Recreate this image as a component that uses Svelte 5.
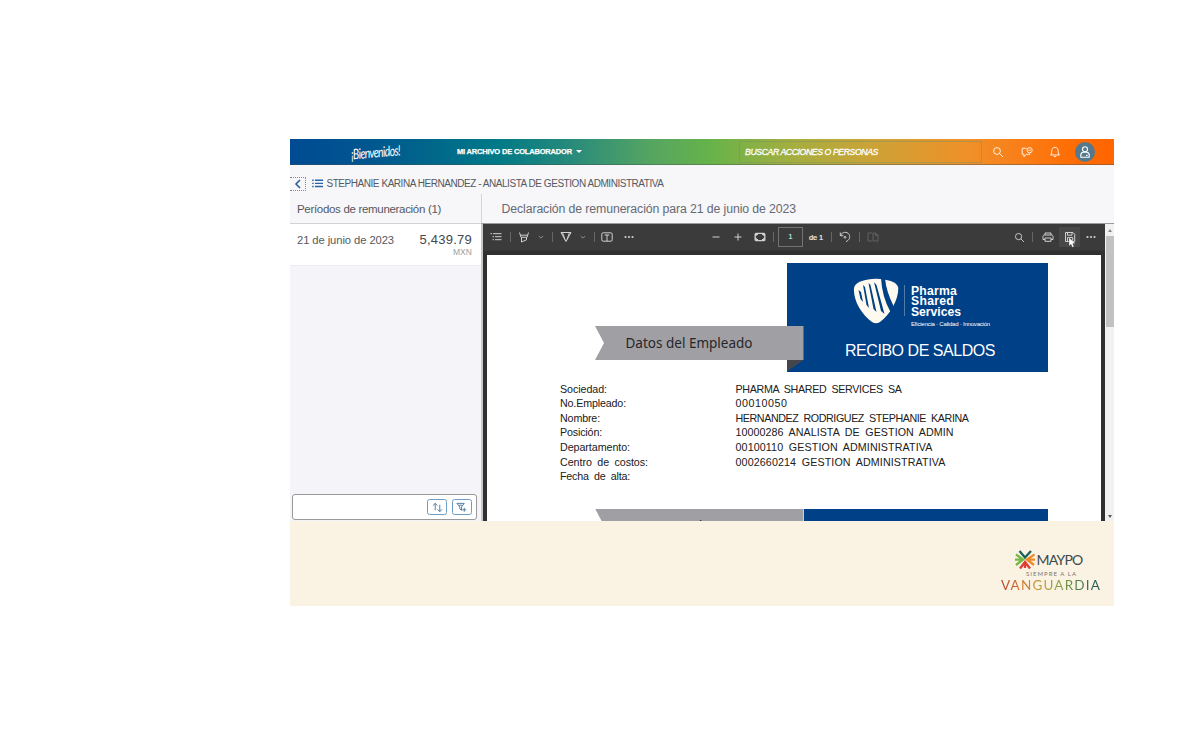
<script>
  const fields = [
    ['Sociedad:', 47, 'PHARMA SHARED SERVICES SA', 166],
    ['No.Empleado:', 66, '00010050', 52],
    ['Nombre:', 40, 'HERNANDEZ RODRIGUEZ STEPHANIE KARINA', 233],
    ['Posición:', 42, '10000286 ANALISTA DE GESTION ADMIN', 218],
    ['Departamento:', 70, '00100110 GESTION ADMINISTRATIVA', 197],
    ['Centro de costos:', 88, '0002660214 GESTION ADMINISTRATIVA', 210],
    ['Fecha de alta:', 70, '', 0]
  ];

  // Spreads the letters of a label so that it takes the given width.
  function track(node, width) {
    const letters = node.textContent.length;
    if (!letters || !width) return;
    const natural = node.getBoundingClientRect().width;
    node.style.letterSpacing = `${(width - natural) / letters}px`;
  }
</script>

{#snippet search()}
  <svg class="ico" viewBox="0 0 12 12"><circle cx="5" cy="5" r="3.4" /><path d="M7.5 7.5L11 11" /></svg>
{/snippet}
{#snippet chevron()}
  <svg class="chev" viewBox="0 0 6 6"><path d="M.8 2L3 4.2L5.2 2" /></svg>
{/snippet}
{#snippet dots()}
  <svg class="ico solid" viewBox="0 0 12 12"><circle cx="2.5" cy="6" r="1.1" /><circle cx="6" cy="6" r="1.1" /><circle cx="9.5" cy="6" r="1.1" /></svg>
{/snippet}

<main class="frame">
  <header class="top">
    <div class="welcome"><span use:track={50}>¡Bienvenidos!</span></div>
    <div class="menu"><span use:track={115}>MI ARCHIVO DE COLABORADOR</span><i class="caret"></i></div>
    <div class="find"><span use:track={133}>BUSCAR ACCIONES O PERSONAS</span></div>
    <nav class="actions">
      {@render search()}
      <svg class="ico" viewBox="0 0 12 12"><path d="M5.500 2.300H1.200V8.300H3V10.800L5.300 8.300H9V7.500" /><circle cx="8.600" cy="4.200" r="2.600" /><path d="M7.400 4.200H9.800" /></svg>
      <svg class="ico" viewBox="0 0 12 12"><path d="M1.500 9C3 7.800 2.700 6 2.800 4.600C3 2.500 4.300 1.300 6 1.300S9 2.500 9.200 4.600C9.300 6 9 7.800 10.500 9ZM4.800 10.600H7.200" /></svg>
      <div class="avatar">
        <svg class="person" viewBox="0 0 12 12"><circle cx="6" cy="3.300" r="2.500" /><path d="M1.800 11.300V9C1.800 7.500 3 6.500 4.300 6.300H7.700C9 6.500 10.200 7.500 10.200 9V11.300ZM7 9.400H8.600" /></svg>
      </div>
    </nav>
  </header>

  <div class="crumb">
    <div class="back"><svg viewBox="0 0 8 10"><path d="M6 1L2 5L6 9" /></svg></div>
    <svg class="list" viewBox="0 0 11 9"><path d="M3 1.300H11M3 4.400H11M3 7.500H11M.2 1.300H1.700M.2 4.400H1.700M.2 7.500H1.700" /></svg>
    <span use:track={337}>STEPHANIE KARINA HERNANDEZ - ANALISTA DE GESTION ADMINISTRATIVA</span>
  </div>

  <section class="body">
    <aside>
      <h2><span use:track={144}>Períodos de remuneración (1)</span></h2>
      <div class="item">
        <span class="date" use:track={97}>21 de junio de 2023</span>
        <div class="amount"><b use:track={52.5}>5,439.79</b><small use:track={19}>MXN</small></div>
      </div>
      <div class="tools">
        <div class="tool"><svg viewBox="0 0 12 12"><path d="M3.500 9V1.500M1 4L3.500 1.500L6 4M8.500 3V10.500M6 8L8.500 10.500L11 8" /></svg></div>
        <div class="tool"><svg viewBox="0 0 12 12"><path d="M1 1.500H9L6 5.500V9L4.200 7.500V5.500ZM3 3.500H7M9 6.300V10.700M6.800 8.500H11.200" /></svg></div>
      </div>
    </aside>

    <div class="detail">
      <h2 class="wide"><span use:track={294.5}>Declaración de remuneración para 21 de junio de 2023</span></h2>
      <div class="viewer">
        <div class="pdf">
          <div class="bar">
            <div class="group left">
              <svg class="ico" viewBox="0 0 12 12"><path d="M3 2.700H11.500M5 5.700H11.500M5 8.700H11.500M.5 2.700H2M2.500 5.700H4M2.500 8.700H4" /></svg>
              <i class="sep"></i>
              <svg class="ico" viewBox="0 0 12 12"><path d="M1.500 1.500L3 6.300H9L10.500 1.500M2.300 4.200H9.700M3.500 6.300V11L8.500 8.800V6.300" /></svg>
              {@render chevron()}
              <i class="sep"></i>
              <svg class="ico" viewBox="0 0 12 12"><path d="M1 1.500H11L6 10.500ZM2.500 1.500L5 8.500M9.500 1.500L7 8.500" /></svg>
              {@render chevron()}
              <i class="sep"></i>
              <svg class="ico" viewBox="0 0 12 12"><rect x=".8" y="1.800" width="10.400" height="8.400" rx="1.400" /><path d="M3.700 4H8.300M6 4V10" /></svg>
              {@render dots()}
            </div>
            <div class="group mid">
              <svg class="ico" viewBox="0 0 12 12"><path d="M2.500 6H9.500" /></svg>
              <svg class="ico" viewBox="0 0 12 12"><path d="M2.500 6H9.500M6 2.500V9.500" /></svg>
              <svg class="ico heavy" viewBox="0 0 12 12"><rect x="1.200" y="2.400" width="9.600" height="7.200" rx="1.200" /><path d="M2 5V3.300H4M8 3.300H10V5M10 7V8.700H8M4 8.700H2V7" /></svg>
              <i class="sep"></i>
              <span class="page">1</span>
              <span class="of" use:track={14}>de 1</span>
              <i class="sep"></i>
              <svg class="ico" viewBox="0 0 12 12"><path d="M1.300 1.500V4.700H4.300M1.500 4.500C3 .8 8 .3 10 3.300C11.600 6 10.300 9.300 7 10.600" /><circle cx="6" cy="6.300" r=".9" /></svg>
              <i class="sep"></i>
              <svg class="ico dim" viewBox="0 0 12 12"><path d="M5 2H1V10H5M6 2H8.500L11 4.500V10H6ZM8.500 2V4.500H11" /></svg>
            </div>
            <div class="group right">
              {@render search()}
              <i class="sep"></i>
              <svg class="ico" viewBox="0 0 12 12"><path d="M3 4V2H9V4M3 8.500H1V5.500C1 4.600 1.600 4 2.500 4H9.500C10.400 4 11 4.600 11 5.500V8.500H9M3 7H9V10.300H3Z" /></svg>
              <div class="save">
                <svg class="ico" viewBox="0 0 12 12"><path d="M1.500 1.500H9L10.700 3.200V10.500H1.500ZM3.500 1.500V4.200H8V1.500M3.500 10.500V6.500H8.700V10.500" /></svg>
                <svg class="cursor" viewBox="0 0 8 11"><path d="M1 .5V9L3 7.200L4.300 10.300L6 9.600L4.700 6.600H7.400Z" /></svg>
              </div>
              {@render dots()}
            </div>
          </div>
          <div class="canvas">
            <article class="paper">
              <div class="banner">
                <div class="card">
                  <div class="brand">
                    <svg class="shield" viewBox="0 0 46 46">
                      <path class="cream" d="M1 10C2 4 12 1 23 .8C34 1 44 4 45.200 9.500C46 20 38 36 27 44Q23 46.500 19 44C8 36 0 22 1 10Z" />
                      <path class="cut" d="M5.500 12L8 14L10 24L7.500 21ZM10 7L12 9L16 30L13.500 27ZM15.500 5L17.500 7L23.500 34L20.500 31ZM21 4L23.500 7L31.500 36L28 33ZM28 0H32Q33 13 41 29L37.500 34Q29 19 28 0Z" />
                    </svg>
                    <i class="rule"></i>
                    <div class="names">
                      <b use:track={46}>Pharma</b><b use:track={43}>Shared</b><b use:track={50}>Services</b>
                      <small use:track={79}>Eficiencia · Calidad · Innovación</small>
                    </div>
                  </div>
                  <div class="receipt"><span use:track={150}>RECIBO DE SALDOS</span></div>
                </div>
                <div class="ribbon"><span use:track={127}>Datos del Empleado</span></div>
                <i class="fold"></i>
              </div>
              <dl>
                {#each fields as [label, lw, value, vw]}
                  <dt><span use:track={lw}>{label}</span></dt>
                  <dd><span use:track={vw}>{value}</span></dd>
                {/each}
              </dl>
              <div class="next">
                <div class="ribbon"><span>Aumentos de Pago</span></div>
                <div class="fill"></div>
              </div>
            </article>
          </div>
        </div>
        <div class="scroll"><i class="up"></i><div class="thumb"></div><i class="down"></i></div>
      </div>
    </div>
  </section>

  <footer>
    <div class="maypo">
      <div class="mark">
        <svg viewBox="0 0 20 20">
          <g fill="none" stroke-width="2.300">
            <path stroke="#17625b" d="M4.500 1L10 7.500L16 1" />
            <path stroke="#73b843" d="M1 4.500L8 9.500L1 15M0 9.700H7" />
            <path stroke="#f08a29" d="M19.500 4.500L12 9.500L19 15M13 9.700H20" />
            <path stroke="#df3d36" d="M5 18.500L10 12L15 18.500M10 13V18" />
          </g>
        </svg>
        <span use:track={46}>MAYPO</span>
      </div>
      <div class="always"><span use:track={51}>SIEMPRE A LA</span></div>
      <div class="van"><span use:track={100}>VANGUARDIA</span></div>
    </div>
  </footer>
</main>

<style>
  :global(body) { background: #fff; }
  * { box-sizing: border-box; }
  span, b, small { white-space: nowrap; display: inline-block; }
  h2, dl, dd { margin: 0; font-weight: 400; }
  svg { display: block; flex: none; }
  .frame { margin: 139px 0 0 290px; width: 824px; height: 466.5px; display: flex; flex-direction: column; overflow: hidden; font-family: "Liberation Sans", Arial, sans-serif; color: #555960; background: #f7f6f9; }
  .ico { width: 12px; height: 12px; fill: none; stroke: currentColor; stroke-width: 1; }
  .ico.solid { fill: currentColor; stroke: none; }
  .ico.heavy { stroke-width: 1.4; }
  .chev { width: 6px; height: 6px; fill: none; stroke: #999; stroke-width: .9; }

  .top { flex: none; height: 26px; display: flex; align-items: center; color: #fff; border-bottom: 1px solid rgba(70, 80, 80, .45); background: linear-gradient(90deg, #004b93 0%, #00578f 10%, #007987 25%, #278a7b 34%, #56a561 44%, #66b34a 51%, #a6ae40 61%, #cda236 71%, #ef9128 82%, #fa7d17 89%, #ff6a00 96%, #ff6500 100%); }
  .welcome { width: 167px; padding-left: 61px; font: italic 10.500px Lato, sans-serif; }
  .welcome span { transform: rotate(-5deg) scaleY(1.35); }
  .menu { width: 282px; display: flex; align-items: center; gap: 4px; font: bold 7.500px "Liberation Sans", sans-serif; -webkit-text-stroke: .25px #fff; }
  .caret { border: 3px solid transparent; border-top-color: #fff; border-bottom: 0; }
  .find { width: 243px; height: 22px; padding-left: 5px; display: flex; align-items: center; border: 1px solid rgba(120, 145, 100, .5); font: italic 8.700px "Liberation Sans", sans-serif; -webkit-text-stroke: .3px #fff; }
  .actions { flex: 1; display: flex; align-items: center; padding-left: 10px; gap: 16.500px; }
  .actions > .ico { color: #fff0df; }
  .avatar { width: 20px; height: 20px; margin-left: -3px; border-radius: 50%; background: #54788d; display: grid; place-items: center; }
  .person { width: 12px; height: 12px; fill: none; stroke: #fff; stroke-width: 1.1; }
  .top, .find { margin-left: 0; }
  .menu { margin-right: 0; }

  .crumb { flex: none; height: 29px; padding-top: 8px; display: flex; align-items: center; font-size: 10px; }
  .back { width: 16px; height: 14px; border: 1px dotted #888; border-left: 0; display: grid; place-items: center; }
  .back svg { width: 8px; height: 10px; fill: none; stroke: #1f5a9c; stroke-width: 1.5; }
  .list { width: 11px; height: 9px; margin: 0 4px 0 5.500px; fill: none; stroke: #2a64a8; stroke-width: 1.4; }

  .body { flex: none; height: 327.200px; display: grid; grid-template: 100% / 191px 633px; overflow: hidden; }
  aside { display: flex; flex-direction: column; background: #f5f4f8; }
  h2 { flex: none; height: 30px; padding: 0 7px; display: flex; align-items: center; font-size: 11.500px; border-bottom: 1px solid #d3d3d6; background: #f7f6f9; }
  h2.wide { padding-left: 19.500px; font-size: 12.300px; border-left: 1px solid #d3d3d6; border-bottom-color: #999; color: #666b73; }
  .item { height: 41.500px; padding: 8px 9px 0 7px; display: flex; justify-content: space-between; background: #fff; border-bottom: 1px solid #ececf0; font-size: 11.200px; }
  .date { margin-top: 2px; }
  .amount { display: flex; flex-direction: column; align-items: flex-end; }
  .amount b { font-weight: 400; font-size: 13px; line-height: 16px; color: #44484e; }
  .amount small { font-size: 8.500px; line-height: 9px; color: #999da3; }
  .tools { margin: auto 4px 1px 1.500px; height: 26px; padding-right: 4.500px; display: flex; align-items: center; justify-content: flex-end; gap: 4.500px; background: #fff; border: 1px solid #999; border-radius: 3px; }
  .tool { width: 20px; height: 16.500px; border: 1px solid #6e9ec5; border-radius: 2.500px; display: grid; place-items: center; }
  .tool svg { width: 11px; height: 11px; fill: none; stroke: #47739b; stroke-width: 1; }

  .detail { display: flex; flex-direction: column; min-width: 0; min-height: 0; }
  .viewer { flex: 1; min-height: 0; display: flex; border-left: 2px solid #c8c8ca; }
  .pdf { width: 622px; display: flex; flex-direction: column; background: #303031; }
  .bar { flex: none; height: 27px; display: flex; align-items: center; background: #3b3b3b; color: #d0d0d0; border-bottom: 1px solid #353535; }
  .group { display: flex; align-items: center; flex: none; }
  .sep { width: 1px; height: 10px; background: #666; }
  .left { width: 225px; padding-left: 7px; }
  .left .sep { margin: 0 7px 0 8px; }
  .left .ico + .chev { margin-left: 8px; }
  .left .chev + .sep { margin-left: 8px; margin-right: 6.500px; }
  .left .solid { margin-left: 10px; }
  .mid { width: 303px; padding-left: 2px; }
  .mid .ico + .ico { margin-left: 10px; }
  .mid .ico:nth-child(3) + .sep { margin-left: 7px; }
  .page { width: 25px; height: 20px; margin-left: 4px; border: 1px solid #747474; text-align: center; font-size: 8px; line-height: 18px; color: #d7fff5; }
  .of { margin: 0 8px 0 6px; font-size: 7.500px; color: #eee; -webkit-text-stroke: .2px #eee; }
  .of + .sep + .ico { margin: 0 8px 0 7px; }
  .mid .dim { color: #626262; margin-left: 7px; }
  .right .sep { margin: 0 9px 0 7px; }
  .right > .ico:nth-child(1) { margin-left: 3px; width: 11px; height: 11px; }
  .save { position: relative; width: 21px; height: 20px; margin: 0 5px; background: #484848; display: grid; place-items: center; }
  .cursor { position: absolute; left: 9px; top: 10px; width: 8px; height: 11px; fill: #fff; stroke: #555; stroke-width: .4; }
  .canvas { flex: 1; min-height: 0; padding: 4px 4px 0; }
  .paper { height: 100%; background: #fff; padding-top: 8px; overflow: hidden; }
  .banner { position: relative; height: 108.500px; padding-left: 300px; }
  .card { width: 261px; height: 108.500px; background: #004087; color: #fff; }
  .brand { display: flex; height: 67px; padding: 15px 0 0 66px; }
  .shield { width: 46px; height: 46px; }
  .cream { fill: #fffaf0; }
  .cut { fill: #004087; }
  .rule { width: 1px; height: 31px; margin: 7px 6px 0 5px; background: #507bab; }
  .names { display: flex; flex-direction: column; align-items: flex-start; padding-top: 7.500px; }
  .names b { font: bold 12.200px/10.700px "Liberation Sans", sans-serif; }
  .names small { font-size: 6px; line-height: 8px; margin-top: 2px; }
  .receipt { padding-left: 58px; margin-top: 11px; font-size: 16px; line-height: 19px; }
  .ribbon { width: 208.500px; height: 34px; padding-left: 30.500px; background: #a09fa4; clip-path: polygon(0 0, 100% 0, 100% 100%, 0 100%, 9px 50%); font: 13.500px/34px "Noto Sans", sans-serif; color: #26262a; }
  .banner .ribbon { position: absolute; left: 108px; top: 63px; }
  .fold { position: absolute; left: 300px; top: 97px; width: 16.500px; height: 11.500px; background: #44464b; clip-path: polygon(0 0, 100% 0, 0 100%); }
  dl { display: grid; grid-template-columns: 175.500px 1fr; padding: 10px 0 0 73px; grid-auto-rows: 14.650px; font-size: 10.700px; line-height: 14.650px; color: #202020; height: 137px; }
  dl span { word-spacing: 2.500px; }
  .next { display: flex; padding-left: 108px; }
  .next .ribbon { line-height: 35px; }
  .fill { width: 244.500px; height: 34px; background: #004087; }
  .scroll { width: 9px; display: flex; flex-direction: column; align-items: center; background: #f1f1f1; }
  .thumb { width: 8px; height: 91px; background: #c2c2c2; }
  .up { margin: 5px 0 4px; border: 2.500px solid transparent; border-bottom: 3px solid #888; border-top: 0; }
  .down { margin: auto 0 3px; border: 2.500px solid transparent; border-top: 3px solid #555; border-bottom: 0; }

  footer { flex: 1; background: #faf2e2; display: flex; justify-content: flex-end; padding: 28px 12px 0 0; }
  .maypo { width: 101px; display: flex; flex-direction: column; align-items: flex-start; }
  .mark { height: 21px; display: flex; align-items: center; gap: 2px; padding-left: 13.500px; font: 14px/20px Lato, sans-serif; color: #3c4a4d; }
  .mark svg { width: 20px; height: 20px; }
  .always { padding-left: 25px; font: 6px/8px Lato, sans-serif; color: #77756c; }
  .van { font: 13.500px/14px Lato, sans-serif; }
  .van span { color: transparent; background: linear-gradient(90deg, #b8402d, #d3792f 22%, #b9a037 42%, #8aa044 58%, #4e7f4c 78%, #1d5152); background-clip: text; -webkit-background-clip: text; }
</style>
